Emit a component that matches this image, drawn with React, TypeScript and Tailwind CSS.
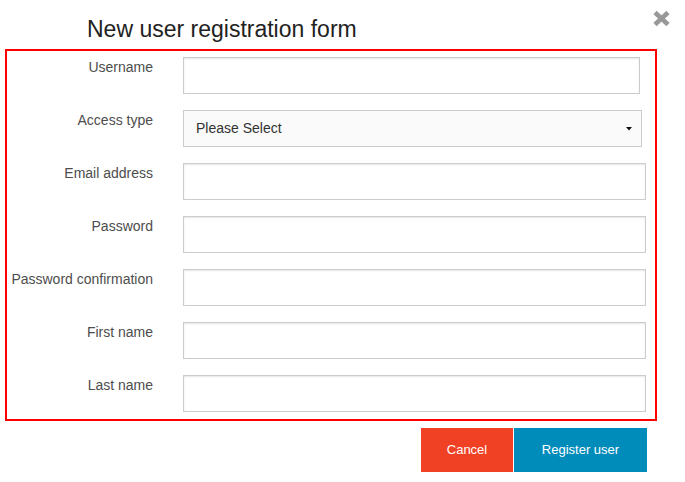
import React from "react";

const rows: { label: string; w: string; select?: boolean }[] = [
  { label: "Username", w: "w-[457px]" },
  { label: "Access type", w: "w-[459px]", select: true },
  { label: "Email address", w: "w-[463px]" },
  { label: "Password", w: "w-[463px]" },
  { label: "Password confirmation", w: "w-[463px]" },
  { label: "First name", w: "w-[463px]" },
  { label: "Last name", w: "w-[463px]" },
];

export default function App() {
  return (
    <div className="relative w-[685px] h-[482px] bg-white font-['Liberation_Sans',Arial,sans-serif]">
      <div className="absolute left-[652px] top-[10px]">
        <svg width="19" height="17" viewBox="0 0 19 17">
          <path d="M3 2.5 L16 14.5 M16 2.5 L3 14.5" stroke="#999" strokeWidth="4.6" strokeLinecap="butt" />
        </svg>
      </div>
      <div className="pt-[15px]">
        <h2 className="pl-[87px] text-[23px] leading-[28px] text-[#222]">New user registration form</h2>
        <div className="mt-[6px] ml-[5px] w-[652px] border-2 border-[#ff0000] pt-[6px] pb-[7px] flex flex-col gap-4">
          {rows.map((r) => (
            <div key={r.label} className="flex">
              <label className="w-[146px] text-right text-[14px] leading-[21px] text-[#4d4d4d]">{r.label}</label>
              <div className="ml-[30px]">
                {r.select ? (
                  <div className={`${r.w} h-[37px] border border-[#cccccc] bg-[#fafafa] flex items-center justify-between pl-[12px] pr-[9px]`}>
                    <span className="text-[14px] text-[#333]">Please Select</span>
                    <svg width="6" height="4" viewBox="0 0 6 4">
                      <path d="M0 0 L6 0 L3 3.5 Z" fill="#111" />
                    </svg>
                  </div>
                ) : (
                  <div className={`${r.w} h-[37px] border border-[#cccccc] bg-white shadow-[inset_0_1px_2px_rgba(0,0,0,0.1)]`} />
                )}
              </div>
            </div>
          ))}
        </div>
        <div className="mt-[7px] flex pl-[421px]">
          <button className="w-[92px] h-[44px] bg-[#f04124] text-white text-[13px]">Cancel</button>
          <button className="ml-[1px] w-[133px] h-[44px] bg-[#008cba] text-white text-[13px]">Register user</button>
        </div>
      </div>
    </div>
  );
}
